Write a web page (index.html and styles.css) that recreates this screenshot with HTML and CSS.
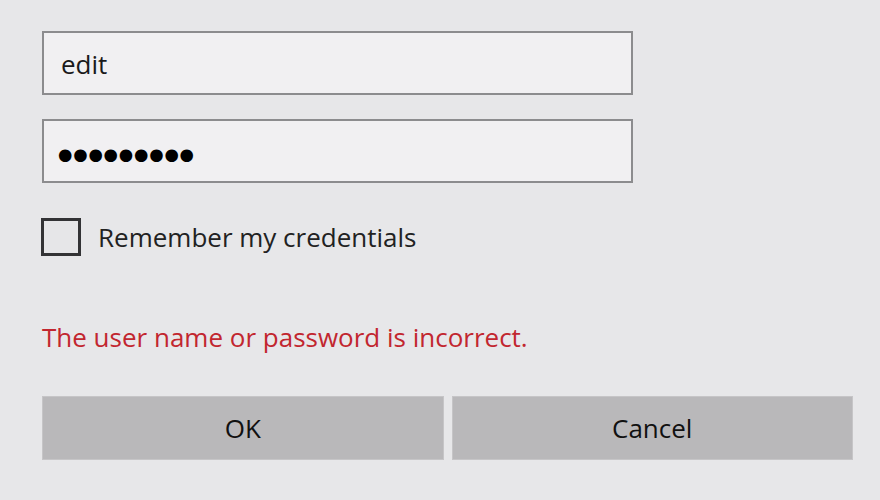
FILE: index.html
```html
<!DOCTYPE html>
<html>
<head>
<meta charset="utf-8">
<link rel="stylesheet" href="styles.css">
</head>
<body>
<div class="dialog">
  <div class="field"><span class="value">edit</span></div>
  <div class="field pw"><span class="value dots">●●●●●●●●●</span></div>
  <label class="check">
    <span class="box"></span>
    <span class="label">Remember my credentials</span>
  </label>
  <div class="error">The user name or password is incorrect.</div>
  <div class="buttons">
    <div class="btn">OK</div>
    <div class="btn">Cancel</div>
  </div>
</div>
</body>
</html>
```
FILE: styles.css
```css
html, body {
  margin: 0;
  padding: 0;
  background: #e7e7e9;
  width: 880px;
  height: 500px;
  overflow: hidden;
}
.dialog {
  font-family: "Open Sans", "Noto Sans", sans-serif;
  font-size: 26px;
  line-height: 26px;
  color: #1a1a1a;
  padding: 31px 0 0 42px;
  width: 811px;
}
.field {
  box-sizing: border-box;
  width: 591px;
  height: 64px;
  border: 2px solid #8c8c8e;
  background: #f1f0f2;
  display: flex;
  align-items: flex-start;
  padding: 18px 0 0 17px;
}
.pw {
  margin-top: 24px;
  padding-top: 21px;
  padding-left: 14px;
}
.dots {
  font-family: "DejaVu Sans", sans-serif;
  font-size: 16.5px;
  letter-spacing: 0.8px;
  color: #000;
}
.check {
  display: flex;
  align-items: flex-start;
  margin-top: 35px;
  margin-left: -1px;
}
.box {
  box-sizing: border-box;
  width: 40px;
  height: 38px;
  border: 3px solid #333335;
  background: #e6e6e8;
}
.label {
  margin: 6px 0 0 17px;
  color: #222;
}
.error {
  margin-top: 68px;
  color: #c2262f;
}
.buttons {
  margin-top: 46px;
  display: flex;
  gap: 8px;
}
.btn {
  flex: 1;
  box-sizing: border-box;
  height: 64px;
  background: #b9b8ba;
  border: 1px solid #c6c5c7;
  display: flex;
  align-items: center;
  justify-content: center;
  color: #111;
}
```
